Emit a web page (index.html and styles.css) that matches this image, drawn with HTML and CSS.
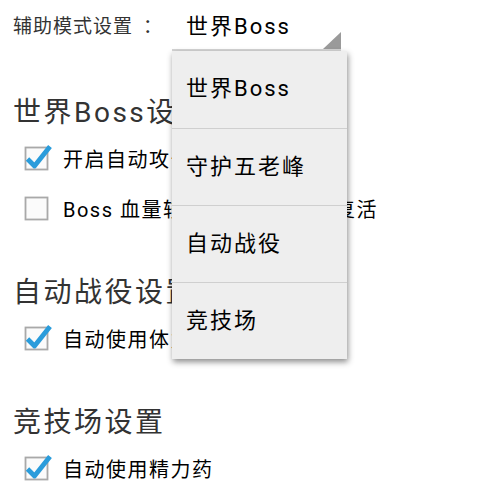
FILE: index.html
```html
<!DOCTYPE html>
<html lang="zh-CN">
<head>
    <meta charset="UTF-8">
    <meta name="viewport" content="width=device-width, initial-scale=1.0">
    <title>辅助设置</title>
    <link rel="stylesheet" href="styles.css">
</head>
<body>
    <div class="top-row">
        <span class="mode-label">辅助模式设置<span class="colon">：</span></span>
        <div class="spinner">
            <span class="spinner-text">世界Boss</span>
            <span class="spinner-arrow"></span>
        </div>
    </div>

    <div class="section first">
        <h2>世界Boss设置</h2>
        <label class="check-row">
            <svg class="check" width="28" height="28" viewBox="0 0 28 28"><rect x="1.5" y="3.5" width="22" height="22" fill="#fbfbfb" stroke="#a9a9a9" stroke-width="1.8"/><path d="M3.5 15 L10.5 22 L26 2.5" fill="none" stroke="#2a9cdb" stroke-width="4.8" stroke-linejoin="round"/></svg>
            <span>开启自动攻击世界Boss</span>
        </label>
        <label class="check-row">
            <svg class="check" width="28" height="28" viewBox="0 0 28 28"><rect x="1.5" y="3.5" width="22" height="22" fill="#fbfbfb" stroke="#a9a9a9" stroke-width="1.8"/></svg>
            <span>Boss 血量较低时自动用元宝复活</span>
        </label>
    </div>

    <div class="section">
        <h2>自动战役设置</h2>
        <label class="check-row">
            <svg class="check" width="28" height="28" viewBox="0 0 28 28"><rect x="1.5" y="3.5" width="22" height="22" fill="#fbfbfb" stroke="#a9a9a9" stroke-width="1.8"/><path d="M3.5 15 L10.5 22 L26 2.5" fill="none" stroke="#2a9cdb" stroke-width="4.8" stroke-linejoin="round"/></svg>
            <span>自动使用体力药</span>
        </label>
    </div>

    <div class="section">
        <h2>竞技场设置</h2>
        <label class="check-row">
            <svg class="check" width="28" height="28" viewBox="0 0 28 28"><rect x="1.5" y="3.5" width="22" height="22" fill="#fbfbfb" stroke="#a9a9a9" stroke-width="1.8"/><path d="M3.5 15 L10.5 22 L26 2.5" fill="none" stroke="#2a9cdb" stroke-width="4.8" stroke-linejoin="round"/></svg>
            <span>自动使用精力药</span>
        </label>
    </div>

    <ul class="dropdown">
        <li>世界Boss</li>
        <li>守护五老峰</li>
        <li>自动战役</li>
        <li>竞技场</li>
    </ul>
</body>
</html>
```

FILE: styles.css
```css
body {
    font-family: Roboto, 'Noto Sans CJK SC', sans-serif;
    margin: 0;
    padding: 0 0 0 13px;
    background-color: #ffffff;
    color: #111;
    position: relative;
    width: 465px;
    height: 498px;
    overflow: hidden;
}
.top-row {
    display: flex;
    align-items: center;
    height: 48px;
}
.mode-label {
    width: 159px;
    font-size: 19px;
    letter-spacing: 1px;
    color: #333;
}
.colon {
    padding-left: 10px;
}
.spinner {
    position: relative;
    width: 169px;
    height: 46px;
    margin-top: 8px;
    display: flex;
    align-items: center;
    border-bottom: 2px solid #d4d4d4;
    box-sizing: border-box;
}
.spinner-text {
    padding-left: 14px;
    padding-bottom: 6px;
    font-size: 22px;
    letter-spacing: 2px;
    color: #000;
}
.spinner-arrow {
    position: absolute;
    right: 0;
    bottom: 0;
    width: 0;
    height: 0;
    border-left: 18px solid transparent;
    border-bottom: 17px solid #9a9a9a;
}
.section {
    margin-top: 40px;
}
.section.first {
    margin-top: 45px;
}
h2 {
    margin: 0;
    height: 40px;
    line-height: 40px;
    font-size: 28px;
    font-weight: normal;
    letter-spacing: 2.5px;
    color: #333;
}
.check-row {
    display: flex;
    align-items: center;
    height: 50px;
    padding-left: 11px;
    font-size: 20px;
    letter-spacing: 1.5px;
    white-space: nowrap;
    color: #000;
}
.check {
    overflow: visible;
    margin-right: 11px;
}
.dropdown {
    position: absolute;
    left: 172px;
    top: 51px;
    width: 175px;
    margin: 0;
    padding: 0;
    list-style: none;
    background-color: #eeeeee;
    box-shadow: 1px 3px 6px rgba(0,0,0,0.45);
}
.dropdown li {
    height: 76px;
    line-height: 76px;
    padding-left: 14px;
    font-size: 22px;
    letter-spacing: 2px;
    color: #000;
    border-top: 1px solid #cfcfcf;
}
.dropdown li:first-child {
    height: 77px;
    border-top: none;
}
```
